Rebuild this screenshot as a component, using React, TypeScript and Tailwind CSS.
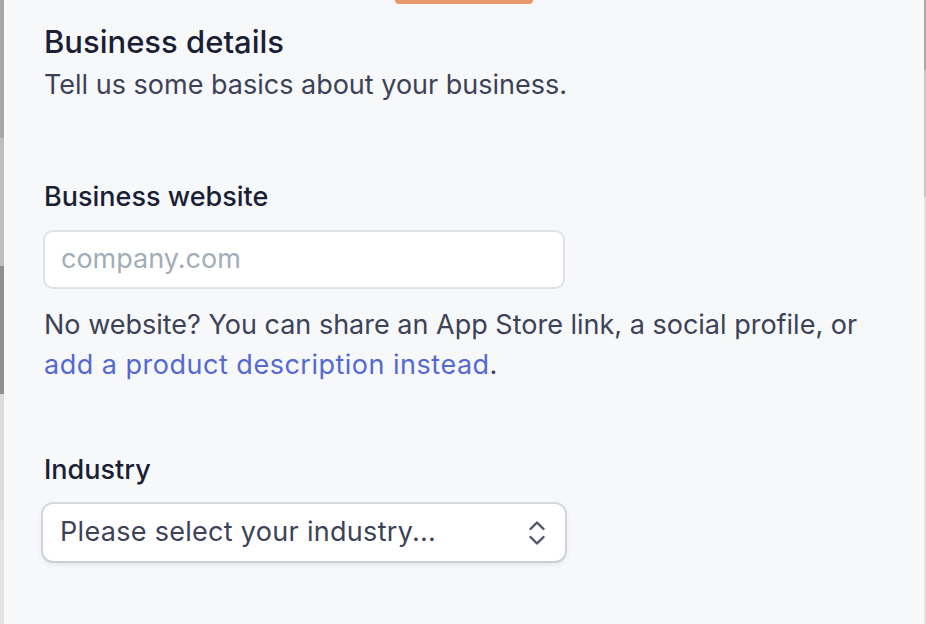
import React from "react"

const font = { fontFamily: "Inter, 'Noto Sans', sans-serif" }

function ChevronsUpDown() {
  return (
    <svg width="16" height="26" viewBox="0 0 16 26" fill="none" stroke="#4f566b" strokeWidth="2.4" strokeLinecap="round" strokeLinejoin="round">
      <path d="M1.5 9 L8 2.5 L14.5 9" />
      <path d="M1.5 17 L8 23.5 L14.5 17" />
    </svg>
  )
}

export default function App() {
  return (
    <div className="flex h-[624px] w-[926px] overflow-hidden bg-[#f7f8fa]" style={font}>
      {/* backdrop edge on the left */}
      <div className="flex w-[4px] shrink-0 flex-col">
        <div className="h-[138px] bg-[#a7a7a7]" />
        <div className="h-[128px] bg-[#bfbfbf]" />
        <div className="h-[128px] bg-[#8f8f8f]" />
        <div className="h-[126px] bg-[#dcdcdc]" />
        <div className="flex-1 bg-[#e3e3e3]" />
      </div>

      {/* panel */}
      <div className="flex-1 bg-[#f7f8fa]">
        <div className="flex justify-center">
          <div className="h-[4px] w-[138px] rounded-b-[6px] bg-[#e99a6c]" />
        </div>

        <div className="pl-[40px]">
          <h1 className="mt-[20px] text-[31px] leading-[36px] font-medium text-[#1a1f36]">Business details</h1>
          <p className="mt-[7px] text-[27px] leading-[36px] text-[#3c4257]">Tell us some basics about your business.</p>

          <label className="mt-[76px] block text-[27px] leading-[36px] font-medium text-[#1a1f36]">Business website</label>
          <div className="-ml-[1px] mt-[15px] flex h-[59px] w-[522px] items-center rounded-[10px] border-2 border-[#e0e2e6] bg-white px-[16px]">
            <span className="text-[27px] text-[#a3acb9]">company.com</span>
          </div>
          <p className="mt-[16px] text-[27px] leading-[40px] text-[#3c4257]">
            No website? You can share an App Store link, a social profile, or
            <br />
            <span className="tracking-[0.5px] text-[#5469d4]">add a product description instead</span>.
          </p>

          <label className="mt-[67px] block text-[27px] leading-[36px] font-medium text-[#1a1f36]">Industry</label>
          <div className="-ml-[1px] mt-[16px] flex h-[57px] w-[522px] items-center justify-between rounded-[10px] bg-white pl-[17px] pr-[20px] shadow-[0_0_0_2px_rgba(60,66,87,0.16),0_3px_6px_rgba(60,66,87,0.12)]">
            <span className="tracking-[0.3px] text-[27px] text-[#3c4257]">Please select your industry...</span>
            <ChevronsUpDown />
          </div>
        </div>
      </div>

      {/* backdrop edge on the right */}
      <div className="flex w-[2px] shrink-0 flex-col">
        <div className="h-[70px] bg-[#a9a9a9]" />
        <div className="h-[127px] bg-[#c6c6c6]" />
        <div className="flex-1 bg-[#e2e2e2]" />
      </div>
    </div>
  )
}
